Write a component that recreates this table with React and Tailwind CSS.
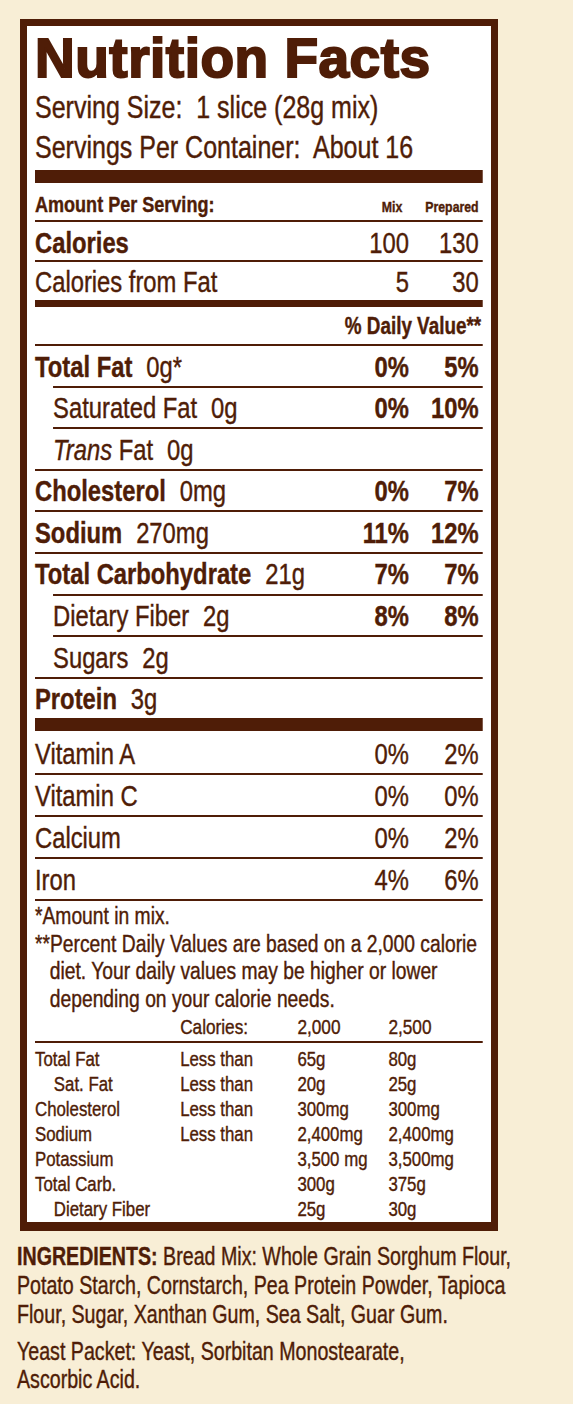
import React from 'react'

// Helvetica Condensed look: Liberation Sans squeezed horizontally.
// Sections are laid out at 1/0.82 width, then scaled back.

const nutrients = [
  { label: 'Total Fat', amt: '0g*', bold: true, mix: '0%', prep: '5%' },
  { label: 'Saturated Fat', amt: '0g', indent: true, mix: '0%', prep: '10%' },
  { label: 'Fat', trans: true, amt: '0g', indent: true },
  { label: 'Cholesterol', amt: '0mg', bold: true, mix: '0%', prep: '7%' },
  { label: 'Sodium', amt: '270mg', bold: true, mix: '11%', prep: '12%' },
  { label: 'Total Carbohydrate', amt: '21g', bold: true, mix: '7%', prep: '7%' },
  { label: 'Dietary Fiber', amt: '2g', indent: true, mix: '8%', prep: '8%' },
  { label: 'Sugars', amt: '2g', indent: true },
  { label: 'Protein', amt: '3g', bold: true },
]

const vitamins = [
  { label: 'Vitamin A', mix: '0%', prep: '2%' },
  { label: 'Vitamin C', mix: '0%', prep: '0%' },
  { label: 'Calcium', mix: '0%', prep: '2%' },
  { label: 'Iron', mix: '4%', prep: '6%' },
]

const limits = [
  ['Total Fat', 'Less than', '65g', '80g'],
  ['Sat. Fat', 'Less than', '20g', '25g', true],
  ['Cholesterol', 'Less than', '300mg', '300mg'],
  ['Sodium', 'Less than', '2,400mg', '2,400mg'],
  ['Potassium', '', '3,500 mg', '3,500mg'],
  ['Total Carb.', '', '300g', '375g'],
  ['Dietary Fiber', '', '25g', '30g', true],
]

export default function App() {
  return (
    <div className="min-h-[1404px] w-[573px] overflow-hidden bg-[#f8eed6] pt-[19px] text-[#4f1d07] font-['Liberation_Sans',Arial,sans-serif]">
      {/* label box */}
      <div className="ml-[20px] w-[478px] border-x-[7px] border-t-[7px] border-b-[9px] border-[#4f1d07] bg-white pl-[8px] pr-[8px]">
        <h1 className="h-[64px] leading-[64px] text-[55px] font-bold [-webkit-text-stroke:2px_#4f1d07] tracking-[0.5px] whitespace-nowrap">
          Nutrition Facts
        </h1>

        <div className="w-[546px] origin-left scale-x-[0.82] [-webkit-text-stroke:0.4px_#4f1d07]">
          <p className="h-[35px] leading-[35px] text-[30.5px] whitespace-pre">Serving Size:  1 slice (28g mix)</p>
          <p className="h-[45px] leading-[45px] text-[30.5px] whitespace-pre">Servings Per Container:  About 16</p>
          <div className="h-[13px] bg-[#4f1d07]" />

          <div className="flex items-baseline h-[37px] pt-[11px] leading-none font-bold">
            <div className="flex-1 text-[22px]">Amount Per Serving:</div>
            <div className="w-[85px] pr-[8px] text-right text-[15px]">Mix</div>
            <div className="w-[90px] pr-[5px] text-right text-[15px]">Prepared</div>
          </div>
          <div className="flex items-baseline h-[40px] border-t-2 border-[#4f1d07] pt-[6.5px] leading-none text-[29px]">
            <div className="flex-1 font-bold">Calories</div>
            <div className="w-[85px] text-right">100</div>
            <div className="w-[90px] pr-[5px] text-right">130</div>
          </div>
          <div className="flex items-baseline h-[40px] border-t-2 border-[#4f1d07] pt-[5.5px] leading-none text-[29px]">
            <div className="flex-1">Calories from Fat</div>
            <div className="w-[85px] text-right">5</div>
            <div className="w-[90px] pr-[5px] text-right">30</div>
          </div>
          <div className="h-[7px] bg-[#4f1d07]" />
          <div className="h-[37px] pt-[7.5px] pr-[2px] leading-none text-right text-[23px] font-bold">% Daily Value**</div>

          {nutrients.map((n) => (
            <div
              key={n.label + n.amt}
              className={`flex items-baseline h-[41.6px] border-t-2 border-[#4f1d07] pt-[6.5px] leading-none text-[29px] ${n.indent ? 'ml-[22px]' : ''}`}
            >
              <div className="flex-1 whitespace-nowrap">
                {n.trans && <i>Trans </i>}
                <span className={n.bold ? 'font-bold' : ''}>{n.label}</span>
                <span className="ml-[17px]">{n.amt}</span>
              </div>
              <div className="w-[85px] text-right font-bold">{n.mix}</div>
              <div className="w-[90px] pr-[5px] text-right font-bold">{n.prep}</div>
            </div>
          ))}
          <div className="h-[13px] bg-[#4f1d07]" />

          {vitamins.map((v, i) => (
            <div
              key={v.label}
              className={`flex items-baseline h-[42px] leading-none text-[29px] ${i === 0 ? 'pt-[8.5px]' : 'border-t-2 border-[#4f1d07] pt-[6.5px]'}`}
            >
              <div className="flex-1">{v.label}</div>
              <div className="w-[85px] text-right">{v.mix}</div>
              <div className="w-[90px] pr-[5px] text-right">{v.prep}</div>
            </div>
          ))}

          {/* footnotes */}
          <div className="border-t-2 border-[#4f1d07] pt-[2px] text-[23.5px] leading-[27.5px] whitespace-nowrap">
            <p>*Amount in mix.</p>
            <p className="pl-[18px] -indent-[18px]">
              **Percent Daily Values are based on a 2,000 calorie<br />
              diet. Your daily values may be higher or lower<br />
              depending on your calorie needs.
            </p>
          </div>
          <div className="grid grid-cols-[177px_143px_111px_1fr] h-[28px] text-[21px] leading-[27px]">
            <span />
            <span>Calories:</span>
            <span>2,000</span>
            <span>2,500</span>
          </div>
          <div className="border-t-2 border-[#4f1d07] pt-[2.5px] pb-[1.5px] text-[20.5px] leading-[25px]">
            {limits.map(([a, b, c, d, sub]) => (
              <div key={a} className="grid grid-cols-[177px_143px_111px_1fr] whitespace-nowrap">
                <span className={sub ? 'pl-[23px]' : ''}>{a}</span>
                <span>{b}</span>
                <span>{c}</span>
                <span>{d}</span>
              </div>
            ))}
          </div>
        </div>
      </div>

      {/* ingredients */}
      <div className="ml-[17px] mt-[11px] w-[630px] origin-left scale-x-[0.785] [-webkit-text-stroke:0.4px_#4f1d07] text-[25px] leading-[29px] whitespace-nowrap">
        <p>
          <span className="font-bold">INGREDIENTS:</span> Bread Mix: Whole Grain Sorghum Flour,<br />
          Potato Starch, Cornstarch, Pea Protein Powder, Tapioca<br />
          Flour, Sugar, Xanthan Gum, Sea Salt, Guar Gum.
        </p>
        <p className="mt-[8px] leading-[28px]">
          Yeast Packet: Yeast, Sorbitan Monostearate,<br />
          Ascorbic Acid.
        </p>
      </div>
    </div>
  )
}
